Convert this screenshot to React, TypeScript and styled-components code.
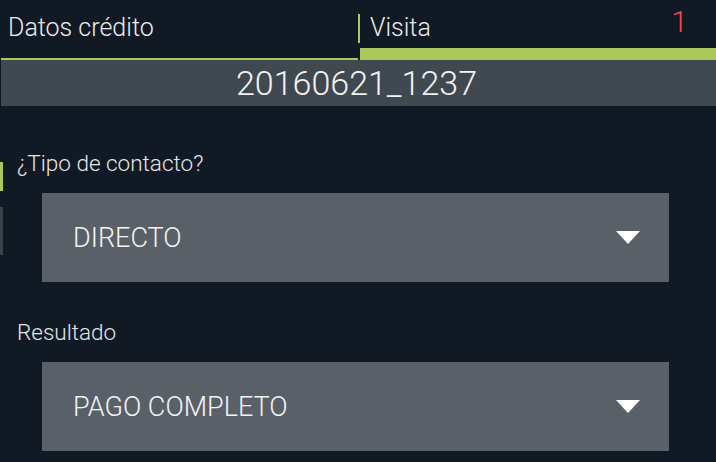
import React from "react";
import styled, { createGlobalStyle } from "styled-components";

const GlobalStyle = createGlobalStyle`
  html, body {
    margin: 0;
    padding: 0;
    background: #111a24;
  }
  body {
    font-family: Roboto, "Liberation Sans", Arial, sans-serif;
    font-weight: 300;
    color: #ececec;
    width: 716px;
    height: 462px;
    overflow: hidden;
  }
`;

const Screen = styled.div`
  width: 716px;
  height: 462px;
  background: #111a24;
  display: flex;
  flex-direction: column;
`;

const TabBar = styled.div`
  display: flex;
  height: 60px;
`;

const Tab = styled.div<{ $active?: boolean }>`
  box-sizing: border-box;
  height: 60px;
  display: flex;
  align-items: flex-start;
  justify-content: space-between;
  font-size: 25px;
  line-height: 28px;
  color: #ececec;
  border-bottom: ${(p) => (p.$active ? "12px" : "2px")} solid #abc95a;
  padding: ${(p) => (p.$active ? "14px 28px 0 10px" : "14px 0 0 7px")};
  ${(p) => (p.$active ? "flex: 1;" : "width: 357px; margin-left: 1px;")}
`;

const DividerCol = styled.div`
  width: 2px;
  height: 60px;
  display: flex;
  flex-direction: column;
`;

const DividerLine = styled.div`
  width: 2px;
  height: 29px;
  margin-top: 14px;
  background: #abc95a;
`;

const Badge = styled.span`
  color: #ea4a4f;
  font-size: 30px;
  line-height: 30px;
  margin-top: -7px;
`;

const IdBar = styled.div`
  height: 46px;
  margin-left: 1px;
  background: #414950;
  display: flex;
  align-items: center;
  justify-content: center;
  font-size: 34px;
  color: #f2f2f2;
  padding-right: 4px;
`;

const Body = styled.div`
  display: flex;
  flex: 1;
`;

const Rail = styled.div`
  width: 3px;
  display: flex;
  flex-direction: column;
`;

const RailMark = styled.div<{ $color: string; $top: number; $h: number }>`
  width: 3px;
  height: ${(p) => p.$h}px;
  margin-top: ${(p) => p.$top}px;
  background: ${(p) => p.$color};
`;

const Fields = styled.div`
  flex: 1;
  display: flex;
  flex-direction: column;
  padding-top: 44px;
  gap: 37px;
`;

const Field = styled.div`
  display: flex;
  flex-direction: column;
  gap: 17px;
`;

const Label = styled.div`
  font-size: 22.5px;
  line-height: 26px;
  margin-left: 14px;
  color: #e6e6e6;
`;

const Select = styled.div`
  box-sizing: border-box;
  height: 89px;
  width: 627px;
  margin-left: 39px;
  background: #5a6068;
  display: flex;
  align-items: center;
  justify-content: space-between;
  padding: 0 29px 0 31px;
  font-size: 27px;
  color: #f4f4f4;
  text-transform: uppercase;
`;

const Caret = () => (
  <svg width="24" height="13" viewBox="0 0 24 13">
    <polygon points="0,0 24,0 12,13" fill="#ffffff" />
  </svg>
);

export default function App() {
  return (
    <Screen>
      <GlobalStyle />
      <TabBar>
        <Tab>Datos crédito</Tab>
        <DividerCol>
          <DividerLine />
        </DividerCol>
        <Tab $active>
          <span>Visita</span>
          <Badge>1</Badge>
        </Tab>
      </TabBar>
      <IdBar>20160621_1237</IdBar>
      <Body>
        <Rail>
          <RailMark $color="#abc95a" $top={56} $h={29} />
          <RailMark $color="#3a4149" $top={16} $h={48} />
        </Rail>
        <Fields>
          <Field>
            <Label>¿Tipo de contacto?</Label>
            <Select>
              <span>Directo</span>
              <Caret />
            </Select>
          </Field>
          <Field>
            <Label>Resultado</Label>
            <Select>
              <span>Pago completo</span>
              <Caret />
            </Select>
          </Field>
        </Fields>
      </Body>
    </Screen>
  );
}
